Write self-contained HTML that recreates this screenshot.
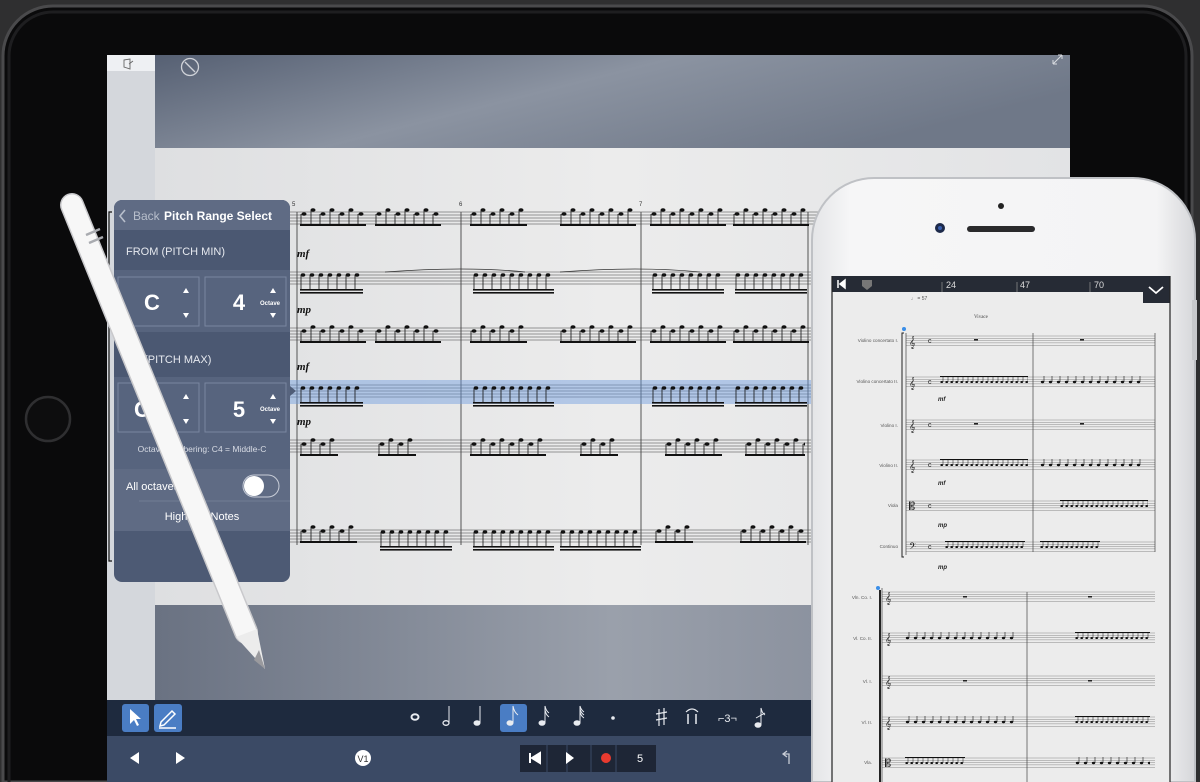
<!DOCTYPE html>
<html><head><meta charset="utf-8"><style>
html,body{margin:0;padding:0;background:#2f2f30;width:1200px;height:782px;overflow:hidden}
svg{display:block}
text{font-family:"Liberation Sans",sans-serif}
.s{font-family:"Liberation Serif",serif}
</style></head><body>
<svg width="1200" height="782" viewBox="0 0 1200 782" xmlns="http://www.w3.org/2000/svg">
<defs>
<linearGradient id="topg" x1="0" y1="0" x2="1" y2="0.4"><stop offset="0" stop-color="#566073"/><stop offset="0.5" stop-color="#8b93a1"/><stop offset="1" stop-color="#6f7888"/></linearGradient>
<linearGradient id="botg" x1="0" y1="0" x2="1" y2="0"><stop offset="0" stop-color="#6a7282"/><stop offset="0.5" stop-color="#9aa0ab"/><stop offset="1" stop-color="#7a8190"/></linearGradient>
<linearGradient id="paper" x1="0" y1="0" x2="1" y2="0"><stop offset="0" stop-color="#dedfe1"/><stop offset="0.5" stop-color="#ececec"/><stop offset="1" stop-color="#e2e3e5"/></linearGradient>
<linearGradient id="phone" x1="0" y1="0" x2="1" y2="0"><stop offset="0" stop-color="#e4e5e7"/><stop offset="0.1" stop-color="#f6f6f7"/><stop offset="0.9" stop-color="#f4f4f5"/><stop offset="1" stop-color="#d6d7da"/></linearGradient>
<g id="st"><path d="M0 0H1M0 3H1M0 6H1M0 9H1M0 12H1" stroke="#777" stroke-width="0.7"/></g>
<g id="sp"><path d="M0 0H1M0 2.3H1M0 4.6H1M0 6.9H1M0 9.2H1" stroke="#888" stroke-width="0.5"/></g>
<pattern id="n16" patternUnits="userSpaceOnUse" width="9" height="30"><ellipse cx="3" cy="5" rx="2.3" ry="1.7" fill="#111"/><path d="M1 5V20" stroke="#111" stroke-width="0.8"/><rect x="0" y="19" width="9" height="1.6" fill="#111"/><rect x="0" y="22" width="9" height="1.6" fill="#111"/></pattern>
<pattern id="n8" patternUnits="userSpaceOnUse" width="19" height="30"><ellipse cx="4" cy="9" rx="2.5" ry="1.8" fill="#111"/><ellipse cx="13" cy="5" rx="2.5" ry="1.8" fill="#111"/><path d="M11 5V20M1 9V20" stroke="#111" stroke-width="0.8"/><rect x="0" y="19" width="19" height="2" fill="#111"/></pattern>
<pattern id="p8" patternUnits="userSpaceOnUse" width="8" height="20"><ellipse cx="2.5" cy="6" rx="1.7" ry="1.2" fill="#111"/><path d="M4 6V-2" stroke="#111" stroke-width="0.6"/><rect x="0" y="-2" width="8" height="1.2" fill="#111"/></pattern>
<pattern id="p16" patternUnits="userSpaceOnUse" width="5" height="20"><ellipse cx="1.7" cy="6" rx="1.4" ry="1" fill="#111"/><path d="M3 6V-2" stroke="#111" stroke-width="0.5"/><rect x="0" y="-2" width="5" height="1" fill="#111"/><rect x="0" y="0" width="5" height="1" fill="#111"/></pattern>
</defs>

<!-- iPad body -->
<path d="M3 782V56a50 50 0 0 1 50-50H1142a50 50 0 0 1 50 50V782z" fill="#0a0a0b" stroke="#4a4a4c" stroke-width="3"/>
<path d="M9 782V56a44 44 0 0 1 44-44H1142a44 44 0 0 1 44 44V782" fill="none" stroke="#1e1e20" stroke-width="3"/>
<circle cx="48" cy="419" r="22" fill="#0d0d0e" stroke="#2f2f31" stroke-width="2.5"/>

<!-- screen -->
<rect x="107" y="55" width="963" height="727" fill="#dfe1e5"/>
<rect x="155" y="55" width="915" height="93" fill="url(#topg)"/>
<rect x="107" y="55" width="48" height="16" fill="#eef0f3"/>
<rect x="107" y="71" width="48" height="629" fill="#d4d7dc"/>
<path d="M124 60l6 -1v10l-6-2z M129 64l4 -3" stroke="#666" fill="none" stroke-width="0.9"/>
<circle cx="190" cy="67" r="8.5" fill="none" stroke="#cfd2d8" stroke-width="1.3"/><path d="M185 62l10 10" stroke="#cfd2d8" stroke-width="1.3"/>
<path d="M1053 64l9-9M1053 64v-4M1053 64h4M1062 55v4M1062 55h-4" stroke="#d8dbe0" stroke-width="1" fill="none"/>
<rect x="155" y="148" width="915" height="457" fill="url(#paper)"/>
<rect x="155" y="605" width="915" height="95" fill="url(#botg)"/>

<!-- score staves -->
<g>
<text x="292" y="206" font-size="6" fill="#333">5</text><text x="459" y="206" font-size="6" fill="#333">6</text><text x="639" y="206" font-size="6" fill="#333">7</text>
<use href="#st" transform="translate(155,212) scale(915,1)"/>
<use href="#st" transform="translate(155,272) scale(915,1)"/>
<use href="#st" transform="translate(155,328) scale(915,1)"/>
<use href="#st" transform="translate(155,385) scale(915,1)"/>
<use href="#st" transform="translate(155,440) scale(915,1)"/>
<use href="#st" transform="translate(155,530) scale(915,1)"/>
<path d="M297 212V545M461 212V545M641 212V545M808 212V545" stroke="#444" stroke-width="0.9"/>
<path d="M112 212h-3v349h3" stroke="#111" stroke-width="1.2" fill="none"/>
<text x="297" y="257" font-size="11" font-weight="bold" font-style="italic" class="s" fill="#111">mf</text>
<text x="297" y="313" font-size="11" font-weight="bold" font-style="italic" class="s" fill="#111">mp</text>
<text x="297" y="370" font-size="11" font-weight="bold" font-style="italic" class="s" fill="#111">mf</text>
<text x="297" y="425" font-size="11" font-weight="bold" font-style="italic" class="s" fill="#111">mp</text>
<g transform="translate(300,205)"><rect width="66" height="30" fill="url(#n8)"/></g>
<g transform="translate(375,205)"><rect width="66" height="30" fill="url(#n8)"/></g>
<g transform="translate(470,205)"><rect width="57" height="30" fill="url(#n8)"/></g>
<g transform="translate(560,205)"><rect width="76" height="30" fill="url(#n8)"/></g>
<g transform="translate(650,205)"><rect width="76" height="30" fill="url(#n8)"/></g>
<g transform="translate(733,205)"><rect width="76" height="30" fill="url(#n8)"/></g>
<g transform="translate(300,270)"><rect width="63" height="30" fill="url(#n16)"/></g>
<g transform="translate(473,270)"><rect width="81" height="30" fill="url(#n16)"/></g>
<g transform="translate(652,270)"><rect width="72" height="30" fill="url(#n16)"/></g>
<g transform="translate(735,270)"><rect width="72" height="30" fill="url(#n16)"/></g>
<path d="M385 272q80 -6 140 0M560 272q80 -6 140 0" stroke="#333" fill="none" stroke-width="0.8"/>
<g transform="translate(300,322)"><rect width="66" height="30" fill="url(#n8)"/></g>
<g transform="translate(375,322)"><rect width="66" height="30" fill="url(#n8)"/></g>
<g transform="translate(470,322)"><rect width="57" height="30" fill="url(#n8)"/></g>
<g transform="translate(560,322)"><rect width="76" height="30" fill="url(#n8)"/></g>
<g transform="translate(650,322)"><rect width="76" height="30" fill="url(#n8)"/></g>
<g transform="translate(733,322)"><rect width="76" height="30" fill="url(#n8)"/></g>
<rect x="290" y="380" width="522" height="24" fill="#6d9be0" opacity="0.45"/>
<path d="M290 386l6 5-6 5z" fill="#4f5d78"/>
<g transform="translate(300,383)"><rect width="63" height="30" fill="url(#n16)"/></g>
<g transform="translate(473,383)"><rect width="81" height="30" fill="url(#n16)"/></g>
<g transform="translate(652,383)"><rect width="72" height="30" fill="url(#n16)"/></g>
<g transform="translate(735,383)"><rect width="72" height="30" fill="url(#n16)"/></g>
<g transform="translate(300,435)"><rect width="38" height="30" fill="url(#n8)"/></g>
<g transform="translate(378,435)"><rect width="38" height="30" fill="url(#n8)"/></g>
<g transform="translate(470,435)"><rect width="76" height="30" fill="url(#n8)"/></g>
<g transform="translate(580,435)"><rect width="38" height="30" fill="url(#n8)"/></g>
<g transform="translate(665,435)"><rect width="57" height="30" fill="url(#n8)"/></g>
<g transform="translate(745,435)"><rect width="60" height="30" fill="url(#n8)"/></g>
<g transform="translate(300,522)"><rect width="57" height="30" fill="url(#n8)"/></g>
<g transform="translate(380,527)"><rect width="72" height="30" fill="url(#n16)"/></g>
<g transform="translate(473,527)"><rect width="81" height="30" fill="url(#n16)"/></g>
<g transform="translate(560,527)"><rect width="81" height="30" fill="url(#n16)"/></g>
<g transform="translate(655,522)"><rect width="38" height="30" fill="url(#n8)"/></g>
<g transform="translate(740,522)"><rect width="66" height="30" fill="url(#n8)"/></g>
</g>

<!-- toolbar -->
<rect x="107" y="700" width="963" height="36" fill="#1e2a3e"/>
<rect x="107" y="736" width="963" height="46" fill="#3b4a65"/>
<rect x="122" y="704" width="27" height="28" rx="3" fill="#4a7dc4"/>
<path d="M130 709l0 15 4-4 3 6 2-1-3-6 5 0z" fill="#fff"/>
<rect x="154" y="704" width="28" height="28" rx="3" fill="#4a7dc4"/>
<path d="M160 726l4-1 11-11-3-3-11 11z M159 728h17" stroke="#fff" stroke-width="1.5" fill="none"/>
<g fill="#e8ebf0" stroke="#e8ebf0">
<ellipse cx="415" cy="717" rx="3.5" ry="2.8" fill="none" stroke-width="2"/>
<ellipse cx="446" cy="723" rx="3" ry="2.3" fill="none" stroke-width="1.3"/><path d="M449 723V706" stroke-width="1"/>
<ellipse cx="477" cy="723" rx="3" ry="2.3"/><path d="M480 723V706" stroke-width="1"/>
<rect x="500" y="704" width="27" height="28" rx="3" fill="#4a7dc4" stroke="none"/>
<ellipse cx="510" cy="723" rx="3" ry="2.3"/><path d="M513 723V706q1 6 5 9" stroke-width="1" fill="none"/>
<ellipse cx="542" cy="723" rx="3" ry="2.3"/><path d="M545 723V706q1 5 4 7M545 710q1 5 4 7" stroke-width="1" fill="none"/>
<ellipse cx="577" cy="723" rx="3" ry="2.3"/><path d="M580 723V706q1 4 4 6M580 709q1 4 4 6M580 712q1 4 4 6" stroke-width="1" fill="none"/>
<circle cx="613" cy="718" r="1.8" stroke="none"/>
<path d="M659 709v17M664 708v17M656 714l11-2M656 720l11-2" stroke-width="1.2" fill="none"/>
<path d="M686 712q6-6 12 0" stroke-width="1.2" fill="none"/><path d="M688 714v10M696 714v10" stroke-width="1.5"/>
<text x="718" y="722" font-size="11" stroke="none">⌐3¬</text>
<ellipse cx="758" cy="725" rx="3" ry="2.3"/><path d="M761 725V708q1 5 4 7M756 718l9-5" stroke-width="1" fill="none"/>
</g>
<path d="M130 758l9-6v12z M176 752l9 6-9 6z" fill="#fff"/>
<circle cx="363" cy="758" r="8" fill="#fff"/><text x="363" y="762" font-size="9" text-anchor="middle" fill="#333">V1</text>
<rect x="520" y="745" width="136" height="27" fill="#1e2636"/>
<path d="M547 745v27M567 745v27M591 745v27M616 745v27" stroke="#3b4a65" stroke-width="1"/>
<path d="M530 753v10M532 758l8-5v10z" stroke="#fff" fill="#fff" stroke-width="2"/>
<path d="M566 752l8 6-8 6z" fill="#fff"/>
<circle cx="606" cy="758" r="5" fill="#e83a2f"/>
<text x="640" y="762" font-size="11" text-anchor="middle" fill="#fff">5</text>
<path d="M789 764v-10h-5M787 751l-4 3 4 3" stroke="#c8cdd6" fill="none" stroke-width="1.3"/>

<!-- panel -->
<g>
<rect x="114" y="200" width="176" height="382" rx="8" fill="#4d5a74"/>
<path d="M114 230V208a8 8 0 0 1 8-8h160a8 8 0 0 1 8 8v22z" fill="#5f6b84"/>
<path d="M125 210l-5 6 5 6" stroke="#b8bfcc" stroke-width="1.6" fill="none"/>
<text x="133" y="220" font-size="12" fill="#b8bfcc">Back</text>
<text x="164" y="220" font-size="12" font-weight="bold" fill="#fff">Pitch Range Select</text>
<rect x="114" y="230" width="176" height="40" fill="#4b5872"/>
<text x="126" y="255" font-size="11" fill="#e6e9ef">FROM (PITCH MIN)</text>
<rect x="114" y="270" width="176" height="62" fill="#57647e"/>
<rect x="118" y="277" width="81" height="49" fill="none" stroke="#7a86a0"/>
<rect x="205" y="277" width="81" height="49" fill="none" stroke="#7a86a0"/>
<text x="152" y="310" font-size="22" font-weight="bold" fill="#fff" text-anchor="middle">C</text>
<text x="239" y="310" font-size="22" font-weight="bold" fill="#fff" text-anchor="middle">4</text>
<path d="M183 293l3-5 3 5zM183 313l3 5 3-5zM270 293l3-5 3 5zM270 313l3 5 3-5z" fill="#fff"/>
<text x="270" y="305" font-size="6" fill="#fff" text-anchor="middle" font-weight="bold">Octave</text>
<rect x="114" y="332" width="176" height="45" fill="#4b5872"/>
<text x="126" y="363" font-size="11" fill="#e6e9ef">TO (PITCH MAX)</text>
<rect x="114" y="377" width="176" height="62" fill="#57647e"/>
<rect x="118" y="383" width="81" height="49" fill="none" stroke="#7a86a0"/>
<rect x="205" y="383" width="81" height="49" fill="none" stroke="#7a86a0"/>
<text x="142" y="417" font-size="22" font-weight="bold" fill="#fff" text-anchor="middle">C</text>
<text x="239" y="417" font-size="22" font-weight="bold" fill="#fff" text-anchor="middle">5</text>
<path d="M183 399l3-5 3 5zM183 419l3 5 3-5zM270 399l3-5 3 5zM270 419l3 5 3-5z" fill="#fff"/>
<text x="270" y="411" font-size="6" fill="#fff" text-anchor="middle" font-weight="bold">Octave</text>
<rect x="114" y="439" width="176" height="30" fill="#57647e"/>
<text x="202" y="452" font-size="8.5" fill="#d8dce5" text-anchor="middle">Octave numbering: C4 = Middle-C</text>
<rect x="114" y="469" width="176" height="62" fill="#5f6b84"/>
<text x="126" y="490" font-size="11" fill="#fff">All octaves</text>
<rect x="243" y="475" width="36" height="22" rx="11" fill="none" stroke="#c8cdd8"/>
<circle cx="254" cy="486" r="10" fill="#fff"/>
<path d="M139 501H290" stroke="#77829a" stroke-width="0.8"/>
<text x="202" y="520" font-size="11" fill="#fff" text-anchor="middle">Highlight Notes</text>
</g>

<!-- Apple Pencil -->
<path d="M72 205L246 632" stroke="#c9c9cc" stroke-width="24" stroke-linecap="round"/>
<path d="M72 205L246 632" stroke="#f7f7f7" stroke-width="21" stroke-linecap="round"/>
<path d="M86 235l14 -6M89 243l14 -6" stroke="#a9abb0" stroke-width="2.5"/>
<path d="M236 637L257 629 265 669z" fill="#ececec"/>
<path d="M259 650L265 669 254 660z" fill="#9a9a9e"/>

<!-- iPhone -->
<path d="M812 782V240a62 62 0 0 1 62-62H1133a62 62 0 0 1 62 62V782z" fill="url(#phone)" stroke="#bfc1c5" stroke-width="2"/>
<rect x="1192" y="300" width="5" height="60" fill="#c8c9cc"/>
<circle cx="1001" cy="206" r="3" fill="#222"/>
<circle cx="940" cy="228" r="5" fill="#1d2a4a"/><circle cx="940" cy="228" r="2" fill="#3a5fae"/>
<rect x="967" y="226" width="68" height="6" rx="3" fill="#2a2a2c"/>
<rect x="832" y="276" width="338" height="506" fill="#ececec"/>
<rect x="832" y="276" width="338" height="16" fill="#262b35"/>
<path d="M838 280v8M840 284l5-4v8z" stroke="#fff" fill="#fff" stroke-width="1.5"/>
<path d="M862 280h10v6l-5 4-5-4z" fill="#777"/>
<path d="M942 282v10M1017 282v10M1090 282v10" stroke="#888" stroke-width="0.8"/>
<text x="946" y="288" font-size="9" fill="#ddd">24</text><text x="1020" y="288" font-size="9" fill="#ddd">47</text><text x="1094" y="288" font-size="9" fill="#ddd">70</text>
<path d="M1143 292h27v11h-27z" fill="#262b35"/>
<path d="M1149 287l7 6 7-6" stroke="#fff" stroke-width="1.8" fill="none"/>
<text x="911" y="300" font-size="5" fill="#555">♩ = 57</text>
<text x="974" y="318" font-size="5" fill="#444" class="s">Vivace</text>
<g class="s" font-size="4.6" fill="#555" text-anchor="end">
<text x="898" y="342">Violino concertato I.</text>
<text x="898" y="383">Violino concertato II.</text>
<text x="898" y="427">Violino I.</text>
<text x="898" y="467">Violino II.</text>
<text x="898" y="507">Viola</text>
<text x="898" y="548">Continuo</text>
<text x="872" y="599">Vln. Co. I.</text>
<text x="872" y="640">Vl. Co. II.</text>
<text x="872" y="683">Vl. I.</text>
<text x="872" y="724">Vl. II.</text>
<text x="872" y="764">Vla.</text>
</g>
<g>
<use href="#sp" transform="translate(906,336) scale(249,1)"/>
<use href="#sp" transform="translate(906,377) scale(249,1)"/>
<use href="#sp" transform="translate(906,420) scale(249,1)"/>
<use href="#sp" transform="translate(906,460) scale(249,1)"/>
<use href="#sp" transform="translate(906,501) scale(249,1)"/>
<use href="#sp" transform="translate(906,542) scale(249,1)"/>
<path d="M906 333V555M1033 333V552M1155 333V552" stroke="#444" stroke-width="0.7"/>
<path d="M904 333h-2v224h2" stroke="#222" stroke-width="1" fill="none"/>
<circle cx="904" cy="329" r="2" fill="#3a8ee8"/>
<use href="#sp" transform="translate(882,592) scale(273,1)"/>
<use href="#sp" transform="translate(882,633) scale(273,1)"/>
<use href="#sp" transform="translate(882,676) scale(273,1)"/>
<use href="#sp" transform="translate(882,717) scale(273,1)"/>
<use href="#sp" transform="translate(882,758) scale(273,1)"/>
<path d="M882 588V782M1027 592V782" stroke="#444" stroke-width="0.7"/>
<path d="M880 590V782" stroke="#222" stroke-width="2"/>
<circle cx="878" cy="588" r="2" fill="#3a8ee8"/>
<g font-size="11" fill="#222" class="s">
<text x="909" y="346">𝄞</text><text x="909" y="387">𝄞</text><text x="909" y="430">𝄞</text><text x="909" y="470">𝄞</text><text x="909" y="510">𝄡</text><text x="909" y="551">𝄢</text>
<text x="885" y="602">𝄞</text><text x="885" y="643">𝄞</text><text x="885" y="686">𝄞</text><text x="885" y="727">𝄞</text><text x="885" y="767">𝄡</text>
</g>
<g font-size="7" fill="#222" class="s"><text x="928" y="343">c</text><text x="928" y="384">c</text><text x="928" y="427">c</text><text x="928" y="467">c</text><text x="928" y="508">c</text><text x="928" y="549">c</text></g>
<rect x="974" y="339" width="4" height="1.5" fill="#222"/><rect x="1080" y="339" width="4" height="1.5" fill="#222"/>
<rect x="974" y="423" width="4" height="1.5" fill="#222"/><rect x="1080" y="423" width="4" height="1.5" fill="#222"/>
<g transform="translate(940,376)"><rect width="88" height="20" fill="url(#p16)"/></g>
<g transform="translate(1040,376)"><rect width="104" height="20" fill="url(#p8)"/></g>
<g transform="translate(940,459)"><rect width="88" height="20" fill="url(#p16)"/></g>
<g transform="translate(1040,459)"><rect width="104" height="20" fill="url(#p8)"/></g>
<g transform="translate(1060,500)"><rect width="88" height="20" fill="url(#p16)"/></g>
<g transform="translate(945,541)"><rect width="80" height="20" fill="url(#p16)"/></g>
<g transform="translate(1040,541)"><rect width="60" height="20" fill="url(#p16)"/></g>
<g font-size="6" font-weight="bold" font-style="italic" class="s" fill="#222"><text x="938" y="401">mf</text><text x="938" y="485">mf</text><text x="938" y="527">mp</text><text x="938" y="569">mp</text></g>
<rect x="963" y="596" width="4" height="1.5" fill="#222"/><rect x="1088" y="596" width="4" height="1.5" fill="#222"/>
<rect x="963" y="680" width="4" height="1.5" fill="#222"/><rect x="1088" y="680" width="4" height="1.5" fill="#222"/>
<g transform="translate(905,632)"><rect width="112" height="20" fill="url(#p8)"/></g>
<g transform="translate(1075,632)"><rect width="75" height="20" fill="url(#p16)"/></g>
<g transform="translate(905,716)"><rect width="112" height="20" fill="url(#p8)"/></g>
<g transform="translate(1075,716)"><rect width="75" height="20" fill="url(#p16)"/></g>
<g transform="translate(905,757)"><rect width="60" height="20" fill="url(#p16)"/></g>
<g transform="translate(1075,757)"><rect width="75" height="20" fill="url(#p8)"/></g>
</g>
<path d="M832 276V782M1170 276V782" stroke="#222" stroke-width="1.2"/>
</svg>
</body></html>
